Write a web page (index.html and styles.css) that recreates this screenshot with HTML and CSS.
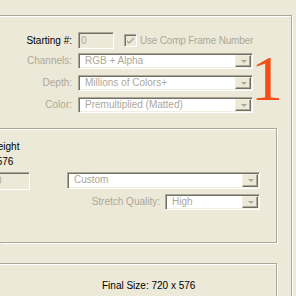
FILE: index.html
```html
<!DOCTYPE html>
<html lang="en">
<head>
    <meta charset="UTF-8">
    <title>Output Module Settings</title>
    <link rel="stylesheet" href="styles.css">
</head>
<body>
<div class="panel">
    <div class="output-form">
        <div class="row row-first">
            <span class="label label-on">Starting #:</span>
            <div class="field field-start">0</div>
            <span class="check">
                <svg width="11" height="11" viewBox="0 0 11 11"><path d="M2 5 L4 7 L9 2 L9 4 L4 9 L2 7 Z" fill="#aca899"/></svg>
            </span>
            <span class="check-text">Use Comp Frame Number</span>
        </div>
        <div class="row row-combo">
            <span class="label">Channels:</span>
            <div class="combo combo-wide"><span class="combo-text">RGB + Alpha</span><span class="combo-btn"></span></div>
        </div>
        <div class="row row-combo">
            <span class="label">Depth:</span>
            <div class="combo combo-wide"><span class="combo-text">Millions of Colors+</span><span class="combo-btn"></span></div>
        </div>
        <div class="row row-combo">
            <span class="label">Color:</span>
            <div class="combo combo-wide"><span class="combo-text">Premultiplied (Matted)</span><span class="combo-btn"></span></div>
        </div>
    </div>

    <!-- annotation number drawn over the dialog -->
    <div class="step-mark">1</div>

    <div class="group group-stretch">
        <div class="dims-col">
            <div>Height</div>
            <div>576</div>
        </div>
        <div class="stretch-row">
            <div class="field field-height">720</div>
            <div class="combo combo-preset"><span class="combo-text">Custom</span><span class="combo-btn"></span></div>
        </div>
        <div class="stretch-row quality-row">
            <span class="quality-label">Stretch Quality:</span>
            <div class="combo combo-quality"><span class="combo-text">High</span><span class="combo-btn"></span></div>
        </div>
    </div>

    <div class="group group-final">
        <p class="final-size">Final Size: 720 x 576</p>
    </div>
</div>
</body>
</html>
```

FILE: styles.css
```css
body {
    margin: 0;
    background-color: #ece9d8;
    font-family: "Liberation Sans", Arial, sans-serif;
    font-size: 10px;
    line-height: 12px;
    color: #000;
    overflow: hidden;
    height: 296px;
}
.panel {
    position: relative;
    box-sizing: border-box;
    width: 292px;
    height: 281px;
    margin-top: 15px;
    border-top: 1px solid #aca899;
    border-right: 1px solid #aca899;
    box-shadow: inset 0 1px 0 #fff, 1px 0 0 #fff;
}
.output-form {
    padding-top: 16px;
}
.row {
    display: flex;
    align-items: center;
}
.row-first {
    height: 17px;
    margin-bottom: 4px;
}
.row-combo + .row-combo {
    margin-top: 6px;
}
.label {
    width: 72px;
    margin-right: 6px;
    text-align: right;
    color: #aca899;
}
.label-on {
    color: #000;
}
.field {
    box-sizing: border-box;
    border: 1px solid;
    border-color: #aca899 #fff #fff #aca899;
    box-shadow: inset 1px 1px 0 #716f64;
    background-color: #ece9d8;
    color: #aca899;
    padding-left: 2px;
}
.field-start {
    width: 36px;
    height: 17px;
    line-height: 15px;
}
.check {
    box-sizing: border-box;
    width: 13px;
    height: 13px;
    margin-left: 10px;
    border: 1px solid;
    border-color: #aca899 #fff #fff #aca899;
    box-shadow: inset 1px 1px 0 #716f64;
    background-color: #ece9d8;
    display: flex;
}
.check svg {
    display: block;
}
.check-text {
    margin-left: 3px;
    color: #aca899;
    letter-spacing: -0.2px;
}
.combo {
    display: flex;
    box-sizing: border-box;
    height: 16px;
    padding: 1px;
    background-color: #fff;
    border: 1px solid;
    border-color: #aca899 #fff #fff #aca899;
    box-shadow: inset 1px 1px 0 #716f64, inset -1px -1px 0 #f1efe2;
}
.combo-text {
    flex: 1;
    padding-left: 5px;
    color: #aca899;
    white-space: nowrap;
    overflow: hidden;
}
.combo-btn {
    position: relative;
    box-sizing: border-box;
    width: 16px;
    border: 1px solid;
    border-color: #f1efe2 #716f64 #716f64 #f1efe2;
    box-shadow: inset -1px -1px 0 #aca899;
    background-color: #ece9d8;
}
.combo-btn::after {
    content: "";
    position: absolute;
    left: 5px;
    top: 4px;
    border-left: 3px solid transparent;
    border-right: 3px solid transparent;
    border-top: 3px solid #aca899;
}
.combo-wide {
    width: 175px;
}
.step-mark {
    position: absolute;
    left: 251px;
    top: 31px;
    font-family: "Liberation Serif", "Times New Roman", serif;
    font-size: 64px;
    line-height: 64px;
    color: #f24f16;
}
.group {
    box-sizing: border-box;
    width: 277px;
    border-top: 1px solid #aca899;
    border-right: 1px solid #aca899;
    border-bottom: 1px solid #aca899;
    box-shadow: inset 0 1px 0 #fff, 1px 1px 0 #fff;
}
.group-stretch {
    margin-top: 15px;
    padding: 10px 16px 32px 0;
}
.dims-col {
    width: 40px;
    margin-left: -15px;
    text-align: center;
    line-height: 15px;
}
.stretch-row {
    display: flex;
    align-items: flex-start;
    margin-top: 3px;
}
.field-height {
    width: 60px;
    height: 18px;
    margin-left: -30px;
    line-height: 16px;
    padding-left: 14px;
}
.combo-preset {
    width: 193px;
    height: 17px;
    margin-left: 37px;
}
.quality-row {
    margin-top: 4px;
    justify-content: flex-end;
    align-items: center;
}
.quality-label {
    margin-right: 5px;
    color: #aca899;
}
.combo-quality {
    width: 95px;
}
.group-final {
    margin-top: 20px;
    padding: 16px 0 5px 0;
    border-bottom: none;
}
.final-size {
    margin: 0;
    padding-left: 102px;
}
```
